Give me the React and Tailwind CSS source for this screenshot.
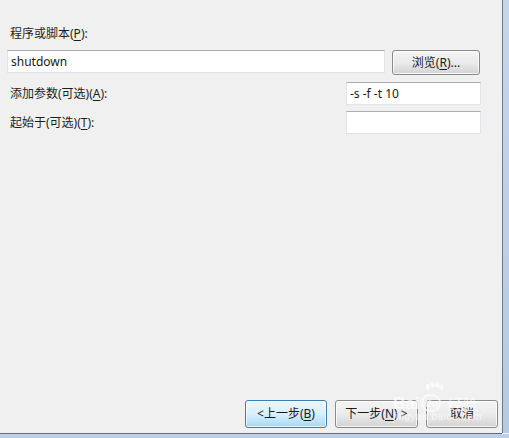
import React from 'react'

const FONT = "font-['Noto_Sans','Noto_Sans_CJK_SC',sans-serif]"

function TextBox({ value, className }) {
    return (
        <div
            className={`h-[23px] bg-white border border-[#dfe3ea] border-t-[#abadb3] flex items-center pl-[3px] text-[12px] text-[#1a1a1a] ${className}`}
        >
            {value}
        </div>
    )
}

function WinButton({ children, className, focused }) {
    const look = focused
        ? 'border-[#3c7fb1] bg-gradient-to-b from-[#eaf6fd] via-[#d9f0fc] to-[#a7d9f5] shadow-[inset_0_0_0_1px_#ffffffb0]'
        : 'border-[#8a8a8a] bg-gradient-to-b from-[#f4f4f4] via-[#ebebeb] to-[#d3d3d3] shadow-[inset_0_0_0_1px_#ffffffc0]'
    return (
        <div
            className={`flex items-center justify-center rounded-[3px] border text-[12px] text-[#1a1a1a] ${look} ${className}`}
        >
            {children}
        </div>
    )
}

function Watermark() {
    return (
        <div className="absolute left-[391px] top-[381px] w-[95px] h-[44px] pointer-events-none text-white opacity-70">
            <svg className="absolute left-[32px] top-[1px]" width="22" height="16" viewBox="0 0 22 16" fill="white">
                <ellipse cx="5" cy="5" rx="2.2" ry="3" />
                <ellipse cx="9.5" cy="2.8" rx="2.2" ry="2.8" />
                <ellipse cx="14.5" cy="2.8" rx="2.2" ry="2.8" />
                <ellipse cx="18.5" cy="5.5" rx="2.1" ry="2.8" />
            </svg>
            <div className="absolute left-[2px] top-[13px] flex items-center gap-[2px] text-[17px] font-bold leading-none font-['Liberation_Sans',sans-serif]">
                <span>Bai</span>
                <span className="w-[20px] h-[18px] rounded-full border-2 border-white text-[11px] flex items-center justify-center">du</span>
                <span className="text-[15px] font-normal font-['Noto_Sans_CJK_SC',sans-serif] ml-[4px]">经验</span>
            </div>
            <div className="absolute left-[2px] top-[31px] text-[10px] leading-none tracking-[0.5px] font-['Liberation_Sans',sans-serif]">
                jingyan.baidu.com
            </div>
        </div>
    )
}

export default function App() {
    return (
        <div className={`w-[509px] h-[438px] flex flex-col bg-[#f0f0f0] ${FONT}`}>
            <div className="flex flex-1">
                <div className="relative flex-1 flex flex-col pt-[26px]">
                    <div className="pl-[10px] h-[16px] leading-[16px] text-[12px] text-[#1e1e1e]">
                        程序或脚本(<u className="underline-offset-2">P</u>):
                    </div>

                    <div className="flex items-center gap-[7px] pl-[7px] mt-[6px]">
                        <TextBox value="shutdown" className="w-[378px]" />
                        <WinButton className="w-[88px] h-[25px] mt-[2px]">
                            浏览(<u className="underline-offset-2">R</u>)...
                        </WinButton>
                    </div>

                    <div className="flex items-center justify-between pl-[10px] pr-[21px] mt-[7px]">
                        <span className="text-[12px] text-[#1e1e1e]">
                            添加参数(可选)(<u className="underline-offset-2">A</u>):
                        </span>
                        <TextBox value="-s -f -t 10" className="w-[135px]" />
                    </div>

                    <div className="flex items-center justify-between pl-[10px] pr-[21px] mt-[6px]">
                        <span className="text-[12px] text-[#1e1e1e]">
                            起始于(可选)(<u className="underline-offset-2">T</u>):
                        </span>
                        <TextBox value="" className="w-[135px] h-[22px]" />
                    </div>

                    <div className="mt-auto flex justify-end gap-[8px] pr-[4px] pb-[5px]">
                        <WinButton focused className="w-[82px] h-[28px]">
                            &lt;上一步(<u className="underline-offset-2">B</u>)
                        </WinButton>
                        <WinButton className="w-[83px] h-[28px]">
                            下一步(<u className="underline-offset-2">N</u>) &gt;
                        </WinButton>
                        <WinButton className="w-[72px] h-[28px]">取消</WinButton>
                    </div>

                    <Watermark />
                </div>
                <div className="w-[1px] bg-[#6b7888]" />
                <div className="w-[6px] bg-gradient-to-b from-[#c3d6ec] to-[#b4cbe4]" />
            </div>
            <div className="h-[1px] bg-[#5f6d7e] mr-[7px]" />
            <div className="h-[4px] bg-[#bcd1e8]" />
        </div>
    )
}
